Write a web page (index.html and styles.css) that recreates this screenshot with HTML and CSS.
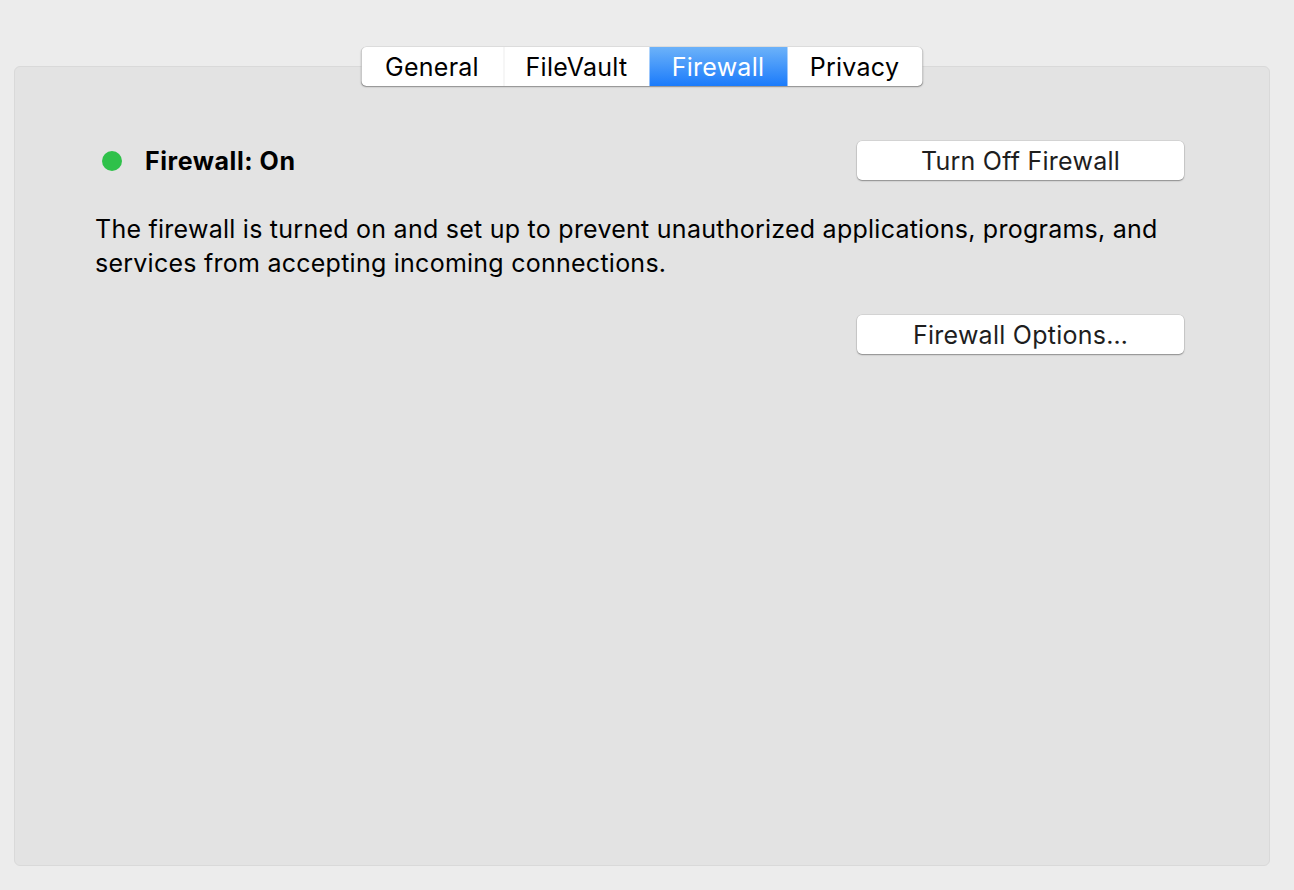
FILE: index.html
```html
<!DOCTYPE html>
<html>
<head>
<meta charset="utf-8">
<link rel="stylesheet" href="styles.css">
</head>
<body>
<div class="window">
  <div class="tabs">
    <div class="tab tab-general">General</div>
    <div class="tab tab-filevault">FileVault</div>
    <div class="tab tab-firewall active">Firewall</div>
    <div class="tab tab-privacy">Privacy</div>
  </div>
  <div class="panel">
    <div class="status-row">
      <div class="status">
        <span class="dot"></span>
        <span class="status-label">Firewall: On</span>
      </div>
      <button class="btn">Turn Off Firewall</button>
    </div>
    <p class="desc">The firewall is turned on and set up to prevent unauthorized applications, programs, and services from accepting incoming connections.</p>
    <div class="options-row">
      <button class="btn">Firewall Options…</button>
    </div>
  </div>
</div>
</body>
</html>
```
FILE: styles.css
```css
html, body {
  margin: 0;
  padding: 0;
  background: #ececec;
  font-family: Inter, "Liberation Sans", sans-serif;
  color: #000;
}
.window {
  padding: 47px 24px 0 14px;
}
.tabs {
  display: flex;
  justify-content: center;
  position: relative;
  z-index: 2;
  height: 39px;
  width: fit-content;
  margin: 0 auto;
  transform: translateX(-0.5px);
  border-radius: 5px;
  background: #fff;
  box-shadow: 0 0 0 0.5px rgba(0,0,0,0.12), 0 1px 1.5px rgba(0,0,0,0.35);
}
.tab {
  display: flex;
  align-items: center;
  justify-content: center;
  font-size: 25px;
  letter-spacing: 0.25px;
  color: #000;
  height: 39px;
  box-sizing: border-box;
}
.tab-general { width: 143px; border-right: 1px solid #dcdcdc; border-radius: 5px 0 0 5px; }
.tab-filevault { width: 145px; }
.tab-firewall { width: 138px; }
.tab-privacy { width: 135px; border-radius: 0 5px 5px 0; }
.tab.active {
  color: #fff;
  background: linear-gradient(#6cb2f9, #1b7bfb);
}
.panel {
  margin-top: -20px;
  height: 800px;
  box-sizing: border-box;
  background: #e3e3e3;
  border: 1px solid #d9d9d9;
  border-radius: 6px;
  padding: 74px 85px 0 80px;
}
.status-row {
  display: flex;
  justify-content: space-between;
  align-items: center;
  height: 39px;
}
.status {
  display: flex;
  align-items: center;
  padding-left: 7px;
}
.dot {
  width: 20px;
  height: 20px;
  border-radius: 50%;
  background: #2fc14a;
  margin-right: 23px;
}
.status-label {
  font-weight: 700;
  font-size: 25px;
  letter-spacing: 0.55px;
}
.btn {
  width: 327px;
  height: 39px;
  background: #fff;
  border: none;
  border-radius: 5px;
  box-shadow: 0 0 0 0.5px rgba(0,0,0,0.12), 0 1px 1.5px rgba(0,0,0,0.35);
  font-family: Inter, "Liberation Sans", sans-serif;
  font-size: 25px;
  letter-spacing: 0.25px;
  color: #1e1e1e;
  padding: 0;
}
.desc {
  margin: 32px 0 0 0;
  font-size: 25px;
  letter-spacing: 0.25px;
  line-height: 34px;
  padding-right: 10px;
}
.options-row {
  display: flex;
  justify-content: flex-end;
  margin-top: 35px;
}
```
